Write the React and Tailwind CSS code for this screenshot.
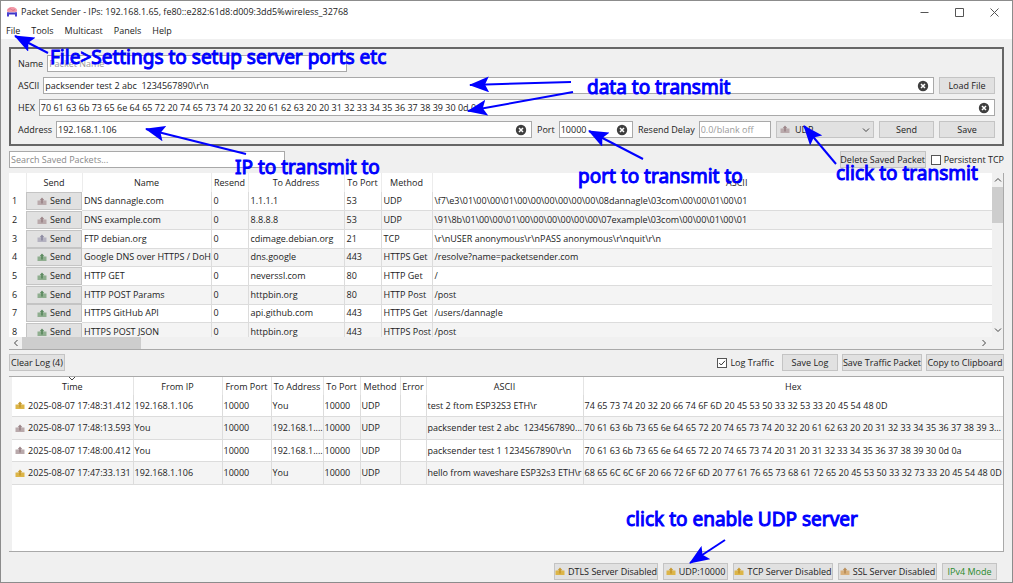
import { useState } from 'react'
import clsx from 'clsx'

const MENU_ITEMS = ['File', 'Tools', 'Multicast', 'Panels', 'Help']

const PACKETS = [
  { id: 1, name: 'DNS dannagle.com', to: '1.1.1.1', port: '53', method: 'UDP', tone: 'udp', ascii: '\\f7\\e3\\01\\00\\00\\01\\00\\00\\00\\00\\00\\00\\08dannagle\\03com\\00\\00\\01\\00\\01' },
  { id: 2, name: 'DNS example.com', to: '8.8.8.8', port: '53', method: 'UDP', tone: 'udp', ascii: '\\91\\8b\\01\\00\\00\\01\\00\\00\\00\\00\\00\\00\\07example\\03com\\00\\00\\01\\00\\01' },
  { id: 3, name: 'FTP debian.org', to: 'cdimage.debian.org', port: '21', method: 'TCP', tone: 'tcp', ascii: '\\r\\nUSER anonymous\\r\\nPASS anonymous\\r\\nquit\\r\\n' },
  { id: 4, name: 'Google DNS over HTTPS / DoH', to: 'dns.google', port: '443', method: 'HTTPS Get', tone: 'http', ascii: '/resolve?name=packetsender.com' },
  { id: 5, name: 'HTTP GET', to: 'neverssl.com', port: '80', method: 'HTTP Get', tone: 'http', ascii: '/' },
  { id: 6, name: 'HTTP POST Params', to: 'httpbin.org', port: '80', method: 'HTTP Post', tone: 'http', ascii: '/post' },
  { id: 7, name: 'HTTPS GitHub API', to: 'api.github.com', port: '443', method: 'HTTPS Get', tone: 'http', ascii: '/users/dannagle' },
  { id: 8, name: 'HTTPS POST JSON', to: 'httpbin.org', port: '443', method: 'HTTPS Post', tone: 'http', ascii: '/post' },
]

const TRAFFIC = [
  { time: '2025-08-07 17:48:31.412', from: '192.168.1.106', to: 'You', tone: 'rx', ascii: 'test 2 ftom ESP32S3 ETH\\r', hex: '74 65 73 74 20 32 20 66 74 6F 6D 20 45 53 50 33 32 53 33 20 45 54 48 0D' },
  { time: '2025-08-07 17:48:13.593', from: 'You', to: '192.168.1....', tone: 'udp', ascii: 'packsender test 2 abc  1234567890...', hex: '70 61 63 6b 73 65 6e 64 65 72 20 74 65 73 74 20 32 20 61 62 63 20 20 31 32 33 34 35 36 37 38 39 30 0...' },
  { time: '2025-08-07 17:48:00.412', from: 'You', to: '192.168.1....', tone: 'udp', ascii: 'packsender test 1 1234567890\\r\\n', hex: '70 61 63 6b 73 65 6e 64 65 72 20 74 65 73 74 20 31 20 31 32 33 34 35 36 37 38 39 30 0d 0a' },
  { time: '2025-08-07 17:47:33.131', from: '192.168.1.106', to: 'You', tone: 'rx', ascii: 'hello from waveshare ESP32s3 ETH\\r', hex: '68 65 6C 6C 6F 20 66 72 6F 6D 20 77 61 76 65 73 68 61 72 65 20 45 53 50 33 32 73 33 20 45 54 48 0D' },
]

const SERVERS = [
  { label: 'DTLS Server Disabled', tone: 'rx', width: 'w-[104px]' },
  { label: 'UDP:10000', tone: 'rx', width: 'w-[65px]' },
  { label: 'TCP Server Disabled', tone: 'rx', width: 'w-[100px]' },
  { label: 'SSL Server Disabled', tone: 'ssl', width: 'w-[99px]' },
]

const TONES = {
  udp: { tray: '#b9a9ab', arrow: '#9c8589' },
  tcp: { tray: '#b4b2c0', arrow: '#8d8ba2' },
  http: { tray: '#8fae8f', arrow: '#5c8a60' },
  rx: { tray: '#dcb548', arrow: '#c79a30' },
  ssl: { tray: '#d8b07c', arrow: '#b98d58' },
}

const NOTES = [
  { text: 'File>Settings to setup server ports etc', place: 'left-[49px] top-[43px]' },
  { text: 'data to transmit', place: 'left-[586px] top-[73px]' },
  { text: 'IP to transmit to', place: 'left-[234px] top-[153px]' },
  { text: 'port to transmit to', place: 'left-[577px] top-[162px]' },
  { text: 'click to transmit', place: 'left-[835px] top-[159px]' },
  { text: 'click to enable UDP server', place: 'left-[625px] top-[505px]' },
]

// tail x, tail y, tip x, tip y
const ARROWS = [
  [47, 52, 14, 35],
  [570, 81, 469, 84],
  [572, 91, 467, 110],
  [245, 153, 145, 128],
  [642, 158, 588, 130],
  [835, 163, 803, 125],
  [724, 539, 689, 562],
]

function PacketIcon({ tone }) {
  const { tray, arrow } = TONES[tone]
  return (
    <svg className="h-[9px] w-[10px] shrink-0" viewBox="0 0 10 9" aria-hidden="true">
      <path d="M0.5 3.500h9v4.500h-9z" fill={tray} />
      <path d="M5 0.5L7.4 3.2H5.9V6.5H4.1V3.2H2.6z" fill={arrow} />
    </svg>
  )
}

function LogoIcon() {
  return (
    <svg className="h-3 w-3 shrink-0" viewBox="0 0 12 12" aria-hidden="true">
      <path d="M1 5.5C0.5 2.5 3 1 6 1s5.500 1.500 5 4.500c-0.500 1-9.500 1-10 0z" fill="#f29aa8" />
      <path d="M2.500 3.500c1-1 2-1 3 0s2 1 3.500 0" stroke="#dd7186" fill="none" />
      <path d="M1 7.500h10" stroke="#3c35c8" strokeWidth="2" />
      <path d="M2 6.500v4M10 6.500v4" stroke="#4a3fd0" strokeWidth="2" />
    </svg>
  )
}

function ClearButton({ label }) {
  return (
    <button type="button" aria-label={label} className="mr-1 shrink-0">
      <svg className="h-3 w-3" viewBox="0 0 12 12" aria-hidden="true">
        <circle cx="6" cy="6" r="5.200" fill="#3f3f3f" />
        <path d="M4 4l4 4M8 4l-4 4" stroke="#fff" strokeWidth="1.500" />
      </svg>
    </button>
  )
}

function Chevron({ d, className }) {
  return (
    <svg className={clsx('h-2 w-2 shrink-0', className)} viewBox="0 0 8 8" aria-hidden="true">
      <path d={d} fill="none" stroke="#444" strokeWidth="1" />
    </svg>
  )
}

function Button({ children, className }) {
  return (
    <button
      type="button"
      className={clsx(
        'flex h-[17px] shrink-0 items-center justify-center gap-[3px] border border-[#c4c4c4] bg-[#e1e1e1] whitespace-nowrap',
        className,
      )}
    >
      {children}
    </button>
  )
}

function Field({ id, label, defaultValue, placeholder, clearable, className }) {
  return (
    <div className={clsx('flex items-center gap-1', className)}>
      <label htmlFor={id} className="shrink-0 whitespace-nowrap">
        {label}
      </label>
      <div className="flex h-[17px] min-w-0 flex-1 items-center border border-[#a9a9a9] bg-white">
        <input
          id={id}
          type="text"
          defaultValue={defaultValue}
          placeholder={placeholder}
          className="w-full min-w-0 px-px outline-none placeholder:text-[#9a9a9a]"
        />
        {clearable ? <ClearButton label={`Clear ${label}`} /> : null}
      </div>
    </div>
  )
}

function TitleBar() {
  return (
    <header className="bg-white">
      <div className="flex h-[22px] items-center pl-[5px]">
        <LogoIcon />
        <h1 className="ml-[3px] flex-1">
          Packet Sender - IPs: 192.168.1.65, fe80::e282:61d8:d009:3dd5%wireless_32768
        </h1>
        <div className="flex items-center gap-[26px] pr-[13px]">
          <button type="button" aria-label="Minimize">
            <svg className="h-[9px] w-[9px]" viewBox="0 0 9 9"><path d="M0.500 4.500h8" stroke="#555" /></svg>
          </button>
          <button type="button" aria-label="Maximize">
            <svg className="h-[9px] w-[9px]" viewBox="0 0 9 9"><path d="M0.500 0.500h8v8h-8z" stroke="#555" fill="none" /></svg>
          </button>
          <button type="button" aria-label="Close">
            <svg className="h-[9px] w-[9px]" viewBox="0 0 9 9"><path d="M0.500 0.500l8 8M8.500 0.500l-8 8" stroke="#555" /></svg>
          </button>
        </div>
      </div>
      <nav className="flex h-4 items-center gap-[11px] pl-[5px]">
        {MENU_ITEMS.map((item) => (
          <button key={item} type="button">
            {item}
          </button>
        ))}
      </nav>
    </header>
  )
}

function PacketForm() {
  return (
    <section className="mt-2 flex flex-col gap-[5px] border-2 border-[#666] px-[7px] py-[6px]">
      <Field id="name" label="Name" placeholder="Packet Name" className="w-[329px]" />
      <div className="flex gap-[5px]">
        <Field id="ascii" label="ASCII" defaultValue={'packsender test 2 abc  1234567890\\r\\n'} clearable className="flex-1" />
        <Button className="w-14">Load File</Button>
      </div>
      <Field
        id="hex"
        label="HEX"
        defaultValue="70 61 63 6b 73 65 6e 64 65 72 20 74 65 73 74 20 32 20 61 62 63 20 20 31 32 33 34 35 36 37 38 39 30 0d 0a"
        clearable
      />
      <div className="flex gap-[5px]">
        <Field id="address" label="Address" defaultValue="192.168.1.106" clearable className="flex-1" />
        <Field id="port" label="Port" defaultValue="10000" clearable className="w-[96px]" />
        <Field id="delay" label="Resend Delay" placeholder="0.0/blank off" className="w-[133px]" />
        <div className="flex h-[17px] w-[98px] items-center border border-[#c4c4c4] bg-[#e1e1e1] px-[3px]">
          <PacketIcon tone="udp" />
          <select aria-label="Protocol" className="ml-[5px] flex-1 appearance-none outline-none">
            <option>UDP</option>
            <option>TCP</option>
            <option>SSL</option>
          </select>
          <Chevron d="M1 2.500l3 3 3-3" />
        </div>
        <Button className="w-[55px]">Send</Button>
        <Button className="w-14">Save</Button>
      </div>
    </section>
  )
}

function SavedPackets() {
  return (
    <section className="mt-[5px]">
      <div className="flex h-[17px] items-center">
        <input
          type="search"
          aria-label="Search Saved Packets"
          placeholder="Search Saved Packets..."
          className="h-[17px] w-[276px] border border-[#a9a9a9] bg-white px-px outline-none placeholder:text-[#8a8a8a]"
        />
        <Button className="ml-auto w-[86px]">Delete Saved Packet</Button>
        <label className="ml-[5px] flex items-center gap-[3px] whitespace-nowrap">
          <CheckBox />
          Persistent TCP
        </label>
      </div>

      <div className="mt-[5px] border-r border-b border-[#a9a9a9]">
        <div className="flex h-[164px]">
          <div className="min-w-0 flex-1 overflow-hidden bg-white">
            <table className="h-[169px] w-[1033px] table-fixed border-collapse text-left">
              <colgroup>
                <col className="w-[17px]" />
                <col className="w-14" />
                <col className="w-[129px]" />
                <col className="w-[37px]" />
                <col className="w-[96px]" />
                <col className="w-[37px]" />
                <col className="w-[51px]" />
                <col />
              </colgroup>
              <thead>
                <tr className="h-[19px] text-center">
                  {['', 'Send', 'Name', 'Resend', 'To Address', 'To Port', 'Method', 'ASCII'].map((head) => (
                    <th key={head} className="border-r border-[#ececec] p-0 pt-px font-normal whitespace-nowrap">
                      {head}
                    </th>
                  ))}
                </tr>
              </thead>
              <tbody>
                {PACKETS.map((row) => (
                  <tr key={row.id} className="even:bg-[#f4f4f4]">
                    <td className="bg-white p-0 pl-[3px]">{row.id}</td>
                    <td className="p-0">
                      <button
                        type="button"
                        className="flex h-[18px] w-full items-center justify-center gap-[3px] border border-[#c4c4c4] bg-[#e1e1e1]"
                      >
                        <PacketIcon tone={row.tone} />
                        Send
                      </button>
                    </td>
                    {[row.name, '0', row.to, row.port, row.method, row.ascii].map((cell, i) => (
                      <td key={i} className="border-r border-b border-[#dcdcdc] p-0 pl-[2px] whitespace-nowrap">
                        {cell}
                      </td>
                    ))}
                  </tr>
                ))}
              </tbody>
            </table>
          </div>
          <div className="flex w-[11px] flex-col items-center">
            <Chevron d="M1 5.500l3-3 3 3" className="my-[3px]" />
            <div className="h-9 w-full bg-[#cdcdcd]" />
            <Chevron d="M1 2.500l3 3 3-3" className="mt-auto mb-[3px]" />
          </div>
        </div>
        <div className="flex h-3 items-center pr-[15px] pl-[3px]">
          <Chevron d="M5.500 1l-3 3 3 3" />
          <div className="ml-[2px] h-full w-[119px] bg-[#cdcdcd]" />
          <Chevron d="M2.500 1l3 3-3 3" className="ml-auto" />
        </div>
      </div>
    </section>
  )
}

function CheckBox({ checked = false, onChange }) {
  return (
    <span className="relative flex h-[10px] w-[10px]">
      <input
        type="checkbox"
        checked={checked}
        onChange={onChange}
        readOnly={!onChange}
        className="h-[10px] w-[10px] appearance-none border border-[#555] bg-white"
      />
      {checked ? (
        <svg className="pointer-events-none absolute inset-0" viewBox="0 0 10 10" aria-hidden="true">
          <path d="M2.200 5l2 2L8 2.800" fill="none" stroke="#333" />
        </svg>
      ) : null}
    </span>
  )
}

function TrafficLog() {
  const [logTraffic, setLogTraffic] = useState(true)

  return (
    <section className="mt-1 flex flex-1 flex-col">
      <div className="flex items-center gap-1">
        <Button className="w-14">Clear Log (4)</Button>
        <label className="mr-1 ml-auto flex items-center gap-[3px] whitespace-nowrap">
          <CheckBox checked={logTraffic} onChange={() => setLogTraffic(!logTraffic)} />
          Log Traffic
        </label>
        <Button className="w-14">Save Log</Button>
        <Button className="w-20">Save Traffic Packet</Button>
        <Button className="w-[78px]">Copy to Clipboard</Button>
      </div>

      <div className="mt-[5px] flex flex-1 flex-col border-y border-r border-[#a9a9a9] pl-[3px]">
        <div className="flex-1 bg-white">
          <table className="h-[108px] w-full table-fixed border-collapse text-left">
            <colgroup>
              <col className="w-[121px]" />
              <col className="w-[89px]" />
              <col className="w-[49px]" />
              <col className="w-[52px]" />
              <col className="w-[37px]" />
              <col className="w-10" />
              <col className="w-[26px]" />
              <col className="w-[157px]" />
              <col />
            </colgroup>
            <thead>
              <tr className="h-[18px] text-center">
                {['Time', 'From IP', 'From Port', 'To Address', 'To Port', 'Method', 'Error', 'ASCII', 'Hex'].map((head) => (
                  <th key={head} className="relative border-r border-[#e4e4e4] p-0 pt-px font-normal whitespace-nowrap last:border-r-0">
                    {head === 'Time' ? <Chevron d="M1 2l3 3 3-3" className="absolute -top-[2px] left-14" /> : null}
                    {head}
                  </th>
                ))}
              </tr>
            </thead>
            <tbody>
              {TRAFFIC.map((row) => (
                <tr key={row.time} className="even:bg-[#f4f4f4]">
                  <td className="border-r border-b border-[#dcdcdc] p-0 pl-[3px]">
                    <div className="flex items-center gap-[3px] whitespace-nowrap">
                      <PacketIcon tone={row.tone} />
                      {row.time}
                    </div>
                  </td>
                  {[row.from, '10000', row.to, '10000', 'UDP', '', row.ascii, row.hex].map((cell, i) => (
                    <td
                      key={i}
                      className="border-r border-b border-[#dcdcdc] p-0 pl-px whitespace-pre last:overflow-hidden last:border-r-0 last:text-ellipsis"
                    >
                      {cell}
                    </td>
                  ))}
                </tr>
              ))}
            </tbody>
          </table>
        </div>
      </div>
    </section>
  )
}

function StatusBar() {
  return (
    <footer className="flex justify-end gap-[5px] pt-[11px] pr-[7px] pb-[2px]">
      {SERVERS.map((server) => (
        <Button key={server.label} className={server.width}>
          <PacketIcon tone={server.tone} />
          {server.label}
        </Button>
      ))}
      <Button className="w-[55px] text-[#2a8a2a]">IPv4 Mode</Button>
    </footer>
  )
}

function Annotations() {
  return (
    <div className="pointer-events-none absolute inset-0">
      <svg className="h-full w-full" aria-hidden="true">
        <defs>
          <marker id="head" markerUnits="userSpaceOnUse" markerWidth="20" markerHeight="16" refX="19" refY="8" orient="auto">
            <path d="M20 8L0 0l4 8-4 8z" fill="#0000ff" />
          </marker>
        </defs>
        {ARROWS.map(([x1, y1, x2, y2]) => (
          <line key={x1} x1={x1} y1={y1} x2={x2} y2={y2} stroke="#0000ff" strokeWidth="2" markerEnd="url(#head)" />
        ))}
      </svg>
      {NOTES.map((note) => (
        <p
          key={note.text}
          className={clsx(
            "absolute font-['Noto_Sans',sans-serif] text-[19px] leading-[26px] font-normal whitespace-nowrap text-[#0000ff] [-webkit-text-stroke:1px_#0000ff]",
            note.place,
          )}
        >
          {note.text}
        </p>
      ))}
    </div>
  )
}

export default function App() {
  return (
    <div className="relative flex min-h-screen flex-col border border-[#8c8c8c] bg-[#f0f0f0] font-['Open_Sans',sans-serif] text-[9px] leading-3 text-[#222]">
      <TitleBar />
      <main className="flex flex-1 flex-col px-2">
        <PacketForm />
        <SavedPackets />
        <TrafficLog />
        <StatusBar />
      </main>
      <Annotations />
    </div>
  )
}
